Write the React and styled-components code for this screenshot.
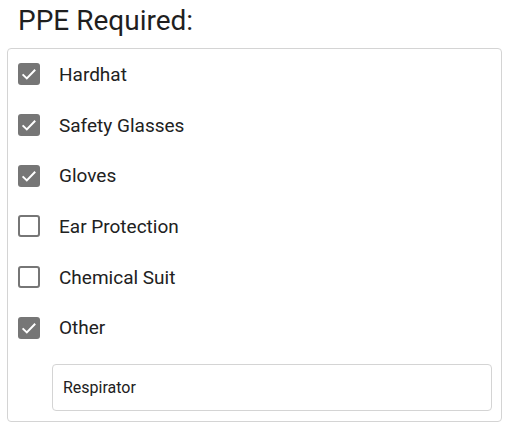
import React, { useState } from 'react'
import styled, { createGlobalStyle } from 'styled-components'

const items = [
  { label: 'Hardhat', checked: true },
  { label: 'Safety Glasses', checked: true },
  { label: 'Gloves', checked: true },
  { label: 'Ear Protection', checked: false },
  { label: 'Chemical Suit', checked: false },
  { label: 'Other', checked: true },
]

function Check({ on }) {
  return (
    <Box on={on}>
      {on && (
        <svg width="22" height="22" viewBox="0 0 22 22">
          <path d="M4.6 11.4 L8.8 15.4 L17.2 6.8" fill="none" stroke="#fff" strokeWidth="2" />
        </svg>
      )}
    </Box>
  )
}

export default function App() {
  const [list, setList] = useState(items)
  const toggle = (i) => setList(list.map((it, j) => (j === i ? { ...it, checked: !it.checked } : it)))
  return (
    <Page>
      <Global />
      <Title>PPE Required:</Title>
      <Panel>
        {list.map((it, i) => (
          <Row key={it.label} onClick={() => toggle(i)}>
            <Check on={it.checked} />
            <Label>{it.label}</Label>
          </Row>
        ))}
        <Input defaultValue="Respirator" />
      </Panel>
    </Page>
  )
}

const Global = createGlobalStyle`
body{
margin:0;
background:#fff;
font-family:Roboto, "Liberation Sans", sans-serif;
}
`

const Page = styled.div`
padding:0 5px 0 7px;
`

const Title = styled.h1`
margin:0;
padding:4px 0 0 11px;
height:48px;
box-sizing:border-box;
font-size:28px;
font-weight:400;
line-height:34px;
color:#1f1f1f;
`

const Panel = styled.div`
border:1px solid #d4d4d4;
border-radius:4px;
padding:0 9px 10px 10px;
display:flex;
flex-direction:column;
`

const Row = styled.label`
display:flex;
align-items:center;
gap:19px;
height:50.7px;
cursor:pointer;
`

const Box = styled.span`
width:22px;
height:22px;
box-sizing:border-box;
border-radius:3px;
border:${props => props.on ? 'none' : '2px solid #767676'};
background:${props => props.on ? '#767676' : '#fff'};
display:flex;
align-items:center;
justify-content:center;
`

const Label = styled.span`
font-size:19px;
color:#212121;
`

const Input = styled.input`
margin:11px 0 0 34px;
height:47px;
box-sizing:border-box;
border:1px solid #d4d4d4;
border-radius:4px;
padding:0 10px;
font-family:Roboto, "Liberation Sans", sans-serif;
font-size:16px;
color:#212121;
outline:none;
`
